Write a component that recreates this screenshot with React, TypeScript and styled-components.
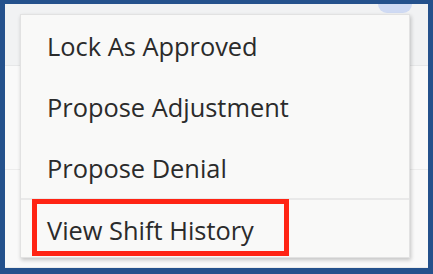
import React from "react";
import styled, { createGlobalStyle } from "styled-components";

const Global = createGlobalStyle`
  html, body { margin: 0; padding: 0; background: #ffffff; }
  #root { width: 433px; height: 274px; }
`;

const Frame = styled.div`
  position: relative;
  box-sizing: border-box;
  width: 433px;
  height: 274px;
  border-style: solid;
  border-color: #24518c;
  border-width: 4px 5px 6px 5px;
  background: #f7f7f7;
  overflow: hidden;
  display: flex;
  flex-direction: column;
`;

const HeaderBand = styled.div`
  height: 63px;
  background: #f1f2f3;
  border-bottom: 1px solid #e6e7e8;
  display: flex;
  justify-content: flex-end;
  padding-right: 16px;
`;

const HiddenButton = styled.div`
  width: 34px;
  height: 9px;
  background: #cfdaf3;
  border-radius: 0 0 10px 10px;
`;

const BodyRow = styled.div<{ $h: number }>`
  height: ${(p) => p.$h}px;
  background: #f9f9f9;
  border-bottom: 1px solid #ececec;
`;

const Menu = styled.div`
  position: absolute;
  left: 15px;
  top: 10px;
  width: 390px;
  height: 244px;
  box-sizing: border-box;
  background: #f9f9f8;
  border: 1px solid #e2e2e2;
  box-shadow: 1px 2px 4px rgba(0, 0, 0, 0.22);
  display: flex;
  flex-direction: column;
`;

const Item = styled.div<{ $divider?: boolean }>`
  height: 61px;
  flex-shrink: 0;
  display: flex;
  align-items: center;
  padding-left: 26px;
  font-family: "Open Sans", "Noto Sans", sans-serif;
  font-size: 25.4px;
  color: #2b2b2b;
  border-top: ${(p) => (p.$divider ? "2px solid #e9e9e9" : "none")};
  box-sizing: border-box;
`;

const Highlight = styled.div`
  position: absolute;
  left: 27px;
  top: 195px;
  width: 257px;
  height: 57px;
  box-sizing: border-box;
  border: 5px solid #ff2414;
  pointer-events: none;
`;

export default function App() {
  const items = ["Lock As Approved", "Propose Adjustment", "Propose Denial"];
  return (
    <>
      <Global />
      <Frame>
        <HeaderBand>
          <HiddenButton />
        </HeaderBand>
        <BodyRow $h={106} />
        <BodyRow $h={100} />
        <Menu>
          {items.map((t) => (
            <Item key={t}>{t}</Item>
          ))}
          <Item $divider>View Shift History</Item>
        </Menu>
        <Highlight />
      </Frame>
    </>
  );
}
